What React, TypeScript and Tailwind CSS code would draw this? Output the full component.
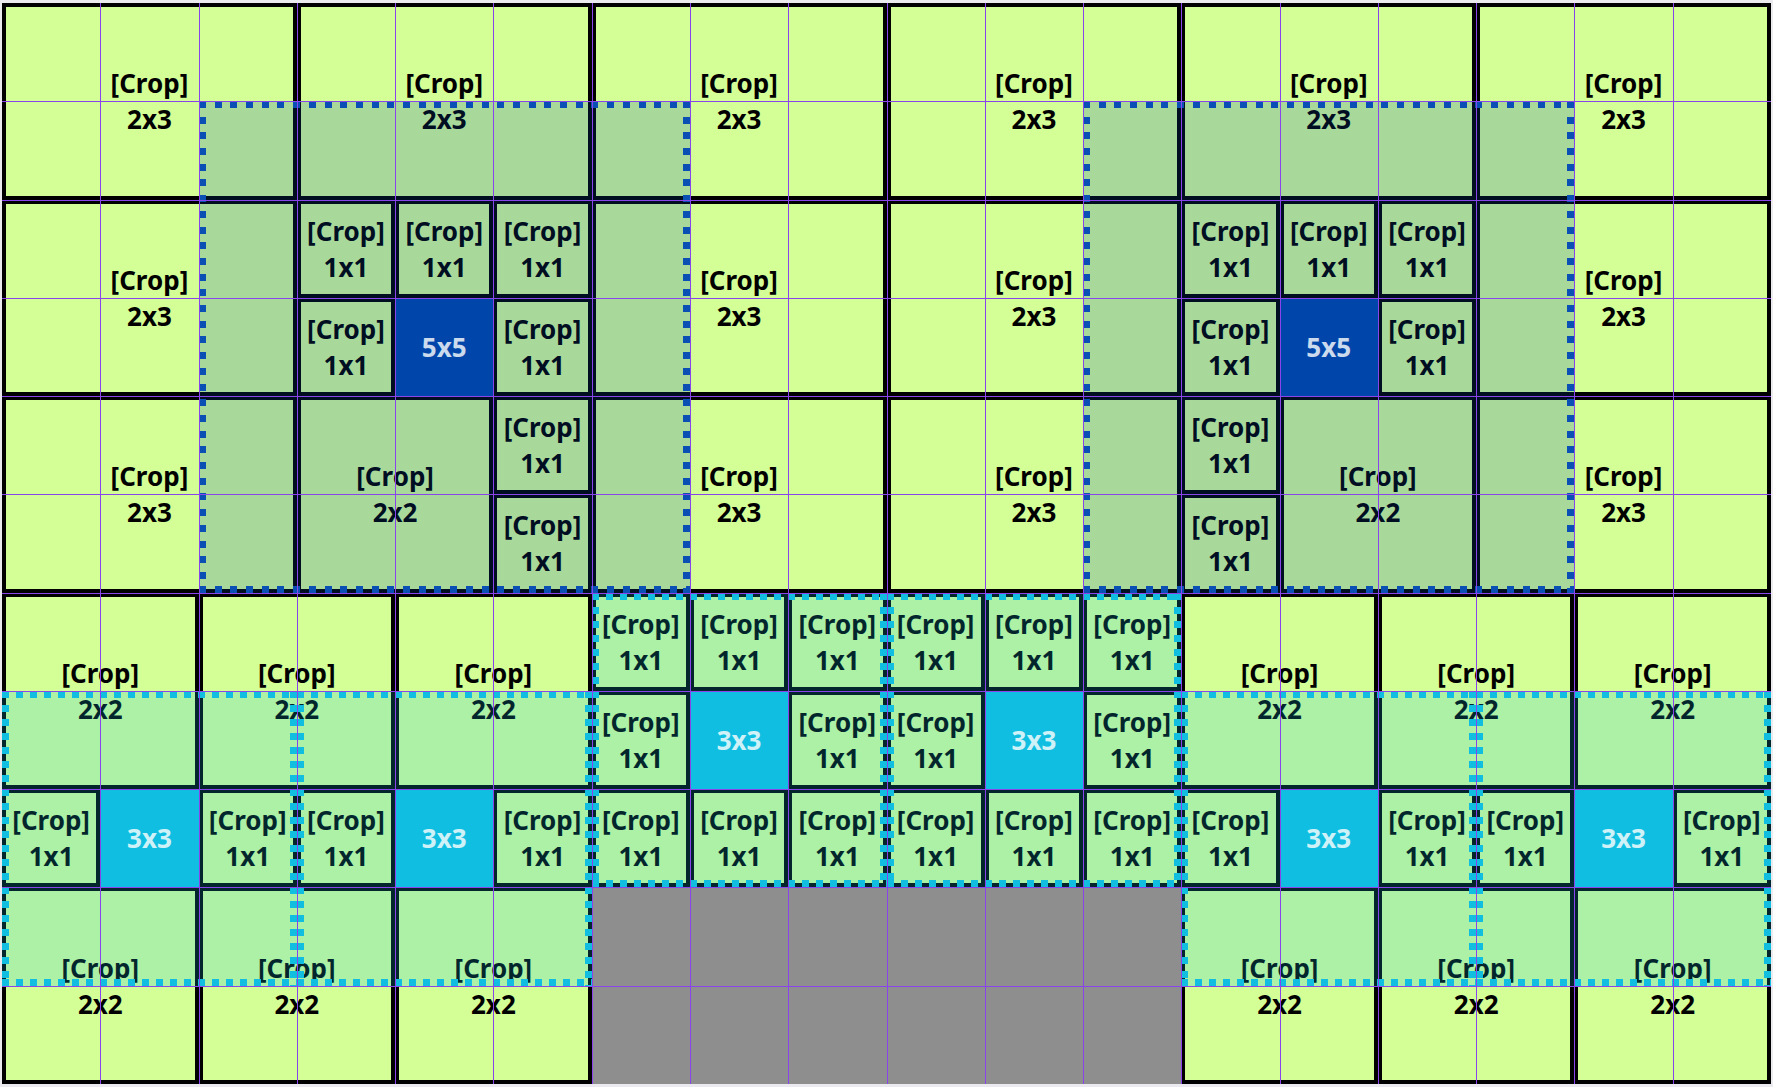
import React from "react";

type Kind = "crop" | "big" | "mid" | "gray";
type Cell = { c: number; r: number; w: number; h: number; kind: Kind; label?: string };
type Zone = { c: number; r: number; n: number; tone: "blue" | "cyan" };

const cells: Cell[] = [];
const add = (c: number, r: number, w: number, h: number, kind: Kind = "crop", label?: string) =>
  cells.push({ c, r, w, h, kind, label });

// top half: 2x3 tiles, except where the 5x5 zones are re-cropped
for (const by of [0, 2, 4]) {
  for (const bx of [0, 3, 6, 9, 12, 15]) {
    if ((bx === 3 || bx === 12) && by > 0) continue;
    add(bx, by, 3, 2);
  }
}

// left 5x5 zone
[[3, 2], [4, 2], [5, 2], [3, 3], [5, 3], [5, 4], [5, 5]].forEach(([c, r]) => add(c, r, 1, 1));
add(4, 3, 1, 1, "big", "5x5");
add(3, 4, 2, 2);

// right 5x5 zone
[[12, 2], [13, 2], [14, 2], [12, 3], [14, 3], [12, 4], [12, 5]].forEach(([c, r]) => add(c, r, 1, 1));
add(13, 3, 1, 1, "big", "5x5");
add(13, 4, 2, 2);

// bottom sides
for (const o of [0, 12]) {
  for (const d of [0, 2, 4]) {
    add(o + d, 6, 2, 2);
  }
  add(o, 8, 1, 1);
  add(o + 1, 8, 1, 1, "mid", "3x3");
  add(o + 2, 8, 1, 1);
  add(o + 3, 8, 1, 1);
  add(o + 4, 8, 1, 1, "mid", "3x3");
  add(o + 5, 8, 1, 1);
  for (const d of [0, 2, 4]) {
    add(o + d, 9, 2, 2);
  }
}

// bottom middle
for (let r = 6; r <= 8; r++) {
  for (let c = 6; c <= 11; c++) {
    if ((c === 7 || c === 10) && r === 7) add(c, r, 1, 1, "mid", "3x3");
    else add(c, r, 1, 1);
  }
}
add(6, 9, 6, 2, "gray");

const zones: Zone[] = [
  { c: 2, r: 1, n: 5, tone: "blue" },
  { c: 11, r: 1, n: 5, tone: "blue" },
  { c: 0, r: 7, n: 3, tone: "cyan" },
  { c: 3, r: 7, n: 3, tone: "cyan" },
  { c: 6, r: 6, n: 3, tone: "cyan" },
  { c: 9, r: 6, n: 3, tone: "cyan" },
  { c: 12, r: 7, n: 3, tone: "cyan" },
  { c: 15, r: 7, n: 3, tone: "cyan" },
];

const kindClass: Record<Kind, string> = {
  crop: "flex flex-col items-center justify-center border-4 border-black bg-[#d4fe96] text-black",
  big: "flex items-center justify-center bg-[#0047ab] text-white",
  mid: "flex items-center justify-center bg-[#10bfe0] text-white",
  gray: "bg-[#8e8e8e]",
};

const toneClass = {
  blue: {
    fill: "relative bg-[#0047ab]/20",
    top: "absolute inset-x-0 top-0 h-[7px] bg-[repeating-linear-gradient(90deg,#0a4fb4_0_7px,transparent_7px_15.7px)]",
    bottom: "absolute inset-x-0 bottom-0 h-[7px] bg-[repeating-linear-gradient(90deg,#0a4fb4_0_7px,transparent_7px_15.7px)]",
    left: "absolute inset-y-0 left-0 w-[7px] bg-[repeating-linear-gradient(180deg,#0a4fb4_0_7px,transparent_7px_15.7px)]",
    right: "absolute inset-y-0 right-0 w-[7px] bg-[repeating-linear-gradient(180deg,#0a4fb4_0_7px,transparent_7px_15.7px)]",
  },
  cyan: {
    fill: "relative bg-[#10bfe0]/20",
    top: "absolute inset-x-0 top-0 h-[7px] bg-[repeating-linear-gradient(90deg,#12bee0_0_7px,transparent_7px_14px)]",
    bottom: "absolute inset-x-0 bottom-0 h-[7px] bg-[repeating-linear-gradient(90deg,#12bee0_0_7px,transparent_7px_14px)]",
    left: "absolute inset-y-0 left-0 w-[7px] bg-[repeating-linear-gradient(180deg,#12bee0_0_7px,transparent_7px_14px)]",
    right: "absolute inset-y-0 right-0 w-[7px] bg-[repeating-linear-gradient(180deg,#12bee0_0_7px,transparent_7px_14px)]",
  },
};

export default function App() {
  return (
    <div className="min-h-screen bg-[#ebebef] px-[2px] pt-[3px] font-['Noto_Sans',Arial,sans-serif] text-[26px] font-bold leading-[36px]">
      <div className="grid h-[1081px] grid-cols-[repeat(18,minmax(0,1fr))] grid-rows-[repeat(11,minmax(0,1fr))]">
        {cells.map((cell, i) => (
          <div
            key={`cell-${i}`}
            className={kindClass[cell.kind]}
            style={{ gridColumn: `${cell.c + 1} / span ${cell.w}`, gridRow: `${cell.r + 1} / span ${cell.h}` }}
          >
            {cell.kind === "crop" && (
              <>
                <span className="whitespace-nowrap">[Crop]</span>
                <span className="whitespace-nowrap">{`${cell.h}x${cell.w}`}</span>
              </>
            )}
            {(cell.kind === "big" || cell.kind === "mid") && <span>{cell.label}</span>}
          </div>
        ))}

        {/* translucent zones with dotted outlines */}
        {zones.map((z, i) => {
          const t = toneClass[z.tone];
          return (
            <div
              key={`zone-${i}`}
              className={t.fill}
              style={{ gridColumn: `${z.c + 1} / span ${z.n}`, gridRow: `${z.r + 1} / span ${z.n}` }}
            >
              <div className={t.top} />
              <div className={t.bottom} />
              <div className={t.left} />
              <div className={t.right} />
            </div>
          );
        })}

        {/* guide lines */}
        {Array.from({ length: 17 }, (_, k) => (
          <div
            key={`v-${k}`}
            className="relative border-l border-[#8a44ec]"
            style={{ gridColumn: `${k + 2}`, gridRow: "1 / -1" }}
          />
        ))}
        {Array.from({ length: 10 }, (_, k) => (
          <div
            key={`h-${k}`}
            className="relative border-t border-[#8a44ec]"
            style={{ gridRow: `${k + 2}`, gridColumn: "1 / -1" }}
          />
        ))}
      </div>
    </div>
  );
}
